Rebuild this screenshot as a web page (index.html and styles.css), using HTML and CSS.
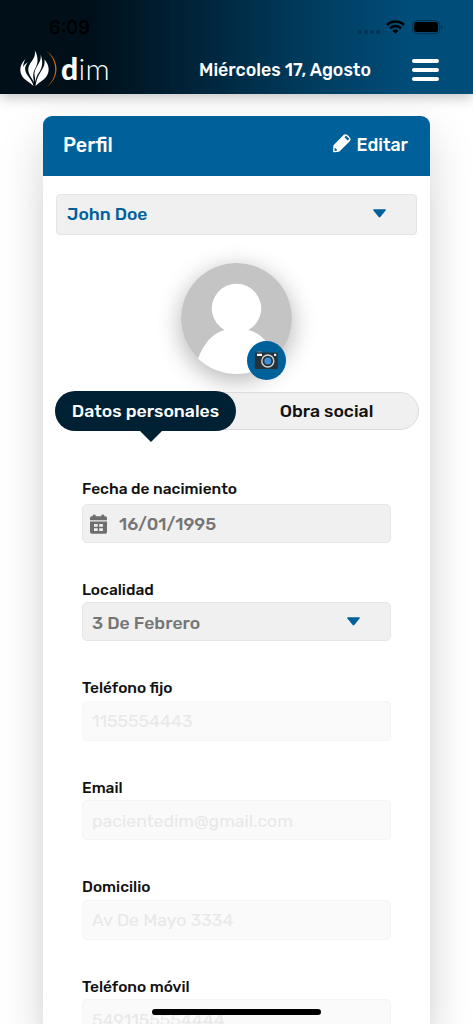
FILE: index.html
```html
<!DOCTYPE html>
<html lang="es">
<head>
<meta charset="utf-8">
<title>Perfil</title>
<link rel="stylesheet" href="styles.css">
</head>
<body>
<header class="topbar">
  <div class="status">
    <span class="clock">6:09</span>
    <svg class="status-icons" width="86" height="16" viewBox="0 0 86 16">
      <g fill="#003454"><circle cx="3" cy="13" r="2"/><circle cx="9" cy="13" r="2"/><circle cx="15" cy="13" r="2"/><circle cx="21" cy="13" r="2"/></g>
      <g fill="none" stroke="#000" stroke-width="2.6"><path d="M30 6a12 12 0 0 1 17 0"/><path d="M33 9.300a7.700 7.700 0 0 1 11 0"/></g>
      <path d="M38.500 14.800l-3-3a4.200 4.200 0 0 1 6 0z"/>
      <rect x="55.600" y="1.600" width="27" height="13" rx="3.600" fill="none" stroke="#00304d"/>
      <rect x="57.200" y="3.100" width="23.800" height="10" rx="2.200"/>
      <path d="M84 6c2 .5 2 3.700 0 4.200z" fill="#00304d"/>
    </svg>
  </div>
  <div class="nav">
    <div class="logo">
      <svg width="38" height="38" viewBox="0 0 38 38">
        <g fill="#fff">
          <path d="M5.500 9C-.5 15-1.500 22 3.500 28c2.800 3.300 6.500 4.300 10 8-.8-4.500-3.500-7-5.800-10.500C4 20 4.500 16.500 8 12c-2 1.500-4 3-4.800 5C3 14.500 4 11.500 5.500 9z"/>
          <path d="M14.800.5c.8 5-1 8-3.600 11.500-3.200 4.300-3.800 8-1.700 12.500 1 2.500 3.300 5 4.300 8-.3-4.500-1-6.500-.3-9.500.8-4 3.500-6.500 4-11.500C17.800 7.500 16.800 3.500 14.800.5z"/>
          <path d="M20.500 4.500c.8 4.500-.5 7-3 11-2.500 4.200-3.700 7-2.600 11.500l.5 5c1-5 1.500-6.500 3.600-9.500 3.300-4.500 4.500-10.500 1.500-18z"/>
          <path d="M24.500 9.500c.5 4.500-.5 7-2.700 10.500-2.600 4.200-5 8-6.300 16 4.500-4.700 8.700-5.500 11.500-10.500 3.200-5.500 1.500-11.500-2.500-16z"/>
        </g>
        <path d="M26 .8C39.500 9 40.500 28 26 37.200 38.500 28 38 10 26 .8z" fill="#c86b12"/>
      </svg>
      <span class="wordmark"><b>d</b>im</span>
    </div>
    <span class="date">Miércoles 17, Agosto</span>
    <div class="burger"><i></i><i></i><i></i></div>
  </div>
</header>
<main class="card">
  <div class="card-head">
    <span class="title">Perfil</span>
    <span class="edit">
      <svg width="18" height="19" viewBox="0 0 18 19"><path fill="#fff" fill-rule="evenodd" d="M.3 11.500 10.500 1.100Q12.500 -.6 14.500 1.100L16.800 3.400Q18.400 5.300 16.800 7.300L6.700 17.200Q5.800 17.900 4.500 18L.8 18.300Q.1 18.300 .1 17.500zM11.400 3.300 14.700 6.600 15.700 5.600Q16.200 4.900 15.700 4.300L13.700 2.300Q13 1.800 12.400 2.300zM1.700 14.200 1.400 17l2.600-.4v-1.300H2.900v-1.100z"/></svg>
      <span class="edit-text">Editar</span>
    </span>
  </div>
  <div class="select person"><span class="person-name">John Doe</span><svg class="caret" width="13" height="9" viewBox="0 0 13 9"><path d="M.8.3h11.400q1 .4.400 1.200L7.300 8q-.8.800-1.600 0L.4 1.500Q-.2.700.8.300z"/></svg></div>
  <div class="avatar">
    <svg class="photo" width="111" height="111" viewBox="0 0 111 111">
      <circle cx="55.500" cy="55.500" r="55.500" fill="#c4c4c4"/>
      <path fill="#fff" d="M43.500 67a24.700 24.700 0 1 1 24 0q18.500 5 26.500 28.500A55.500 55.500 0 0 1 17 95.500Q26 72 43.500 67z"/>
    </svg>
    <svg class="camera" width="39" height="39" viewBox="0 0 39 39">
      <circle cx="19.500" cy="19.500" r="19.500" fill="#00609a"/>
      <rect x="10" y="10" width="5" height="3" fill="#5a686d"/>
      <rect x="7.800" y="11.500" width="23" height="16.500" rx="1.300" fill="#263238"/>
      <rect x="10" y="12.800" width="5" height="2.200" fill="#fff"/><rect x="27" y="12.800" width="2.200" height="2.200" fill="#eceff1"/>
      <circle cx="20.800" cy="20" r="6" fill="#263238" stroke="#cfd8dc" stroke-width="1.400"/>
      <circle cx="20.800" cy="20" r="3.500" fill="#3c8fdb"/>
    </svg>
  </div>
  <div class="tabs">
    <span class="tab active">Datos personales</span>
    <span class="tab">Obra social</span>
  </div>
  <form class="fields">
    <div class="field f1"><label>Fecha de nacimiento</label>
      <div class="input"><svg width="17" height="20" viewBox="0 0 17 20"><path fill="#6e6e6e" fill-rule="evenodd" d="M2.800 2.300V1q1.400-1.200 2.800 0v1.300h5.800V1q1.400-1.200 2.800 0v1.300h1.100Q17 2.300 17 4v2.300H0V4q0-1.700 1.700-1.700zM0 7.500h17V18q0 1.700-1.700 1.700H1.700Q0 19.700 0 18zM4 10v2.800h3.700V10zM9.200 10v2.800h3.700V10zM4 14.300v2.800h3.700v-2.800zM9.200 14.300v2.800h3.700v-2.800z"/></svg><span>16/01/1995</span></div></div>
    <div class="field f2"><label>Localidad</label>
      <div class="input"><span>3 De Febrero</span><svg class="caret" width="13" height="9" viewBox="0 0 13 9"><path d="M.8.3h11.400q1 .4.400 1.200L7.300 8q-.8.800-1.600 0L.4 1.500Q-.2.700.8.300z"/></svg></div></div>
    <div class="field"><label>Teléfono fijo</label><div class="input off"><span>1155554443</span></div></div>
    <div class="field"><label>Email</label><div class="input off"><span>pacientedim@gmail.com</span></div></div>
    <div class="field"><label>Domicilio</label><div class="input off"><span>Av De Mayo 3334</span></div></div>
    <div class="field"><label>Teléfono móvil</label><div class="input off"><span>5491155554444</span></div></div>
  </form>
</main>
<div class="home-bar"></div>
</body>
</html>
```
FILE: styles.css
```css
* { box-sizing: border-box; }
body { margin: 0; height: 1024px; overflow: hidden; background: #fff; font-family: Rubik, Roboto, sans-serif; font-weight: 500; color: #111; }
.topbar { position: relative; z-index: 2; height: 94px; background: linear-gradient(90deg, #000f18 0%, #000f18 18%, #002135 38%, #003d60 67%, #004d7a 87%, #004d7a 100%); box-shadow: 0 3px 13px rgba(0,0,0,.25); }
.status { height: 44px; padding: 19px 30px 0 49px; display: flex; justify-content: space-between; align-items: flex-start; }
.clock { font: 500 18.5px/17px Inter, sans-serif; color: #000; }
.nav { height: 50px; padding: 0 34px 0 20px; display: flex; align-items: center; color: #fff; }
.logo { width: 179px; display: flex; align-items: center; gap: 3px; }
.wordmark { padding-bottom: 3px; font: 300 30px/32px Lato, sans-serif; letter-spacing: .3px; }
.wordmark b { font-weight: 900; }
.date { width: 213px; padding-top: 1px; font-size: 17.75px; }
.burger { width: 27px; padding-top: 1px; display: flex; flex-direction: column; gap: 5px; }
.burger i { height: 4px; border-radius: 2px; background: #fff; }
.card { width: 387px; height: 908px; margin: 22px 0 0 43px; background: #fff; border-radius: 9px 9px 0 0; box-shadow: 0 20px 45px rgba(0,0,0,.17), 0 80px 30px rgba(0,0,0,.04); }
.card-head { height: 60px; padding: 0 22px 2px 20px; border-radius: 9px 9px 0 0; background: #00609a; color: #fff; display: flex; align-items: center; justify-content: space-between; font-size: 19.700px; }
.edit { display: flex; align-items: center; gap: 5px; font-size: 17.700px; }
.edit svg { margin-top: -4px; }
.edit-text { margin-top: -1px; }
.select { margin: 18px 13px 0; height: 41px; padding: 0 30px 0 10px; display: flex; align-items: center; justify-content: space-between; background: #f0f0f0; border: 1px solid #e5e5e5; border-radius: 4px; }
.person { color: #00609a; font-size: 17.500px; }
.person-name { padding-bottom: 2px; }
.caret { fill: #00609a; margin-top: -2px; }
.avatar { position: relative; width: 111px; height: 111px; margin: 28px 0 0 138px; border-radius: 50%; box-shadow: 0 6px 25px rgba(0,0,0,.3); }
.photo { display: block; }
.camera { position: absolute; left: 66px; top: 77.500px; }
.tabs { position: relative; width: 364px; height: 40px; margin: 17px 0 0 12px; display: flex; align-items: center; }
.tabs::before { content: ""; position: absolute; inset: 1px 0; border: 1px solid #dcdcdc; border-radius: 20px; background: #f0f0f0; }
.tab { position: relative; flex: 1; height: 40px; padding: 0 2px 2px 0; border-radius: 20px; font-size: 17.650px; display: flex; align-items: center; justify-content: center; }
.active { padding-right: 0; background: #002033; color: #fff; }
.active::after { content: ""; position: absolute; left: 84px; top: 39px; border: 12px solid transparent; border-top-color: #002033; border-bottom: 0; }
.fields { padding: 49px 39px 0; }
.field { margin-bottom: 19.500px; height: 80px; }
.field:last-child { margin: 0; height: 60px; }
.field label { display: block; height: 21.500px; font-size: 15.500px; line-height: 19px; }
.f1 { height: 100px; margin: 0; }
.f1 label { height: 24px; line-height: 18px; }
.f2 { height: 99px; margin: 0; }
.f2 label { height: 22px; line-height: 20px; }
.input { height: 39px; padding: 0 30px 0 9px; display: flex; align-items: center; justify-content: space-between; background: #f0f0f0; border: 1px solid #e6e6e6; border-radius: 5px; font-size: 17.650px; color: #757575; }
.f1 .input { justify-content: flex-start; padding-left: 7px; gap: 12px; }
.f2 .input { padding-top: 2px; }
.off { height: 40px; background: #fafafa; border-color: #f5f5f5; color: #e8e8e8; font-weight: 400; }
.home-bar { position: absolute; z-index: 3; left: 152px; top: 1009px; width: 169px; height: 6px; border-radius: 3px; background: #000; }
```
